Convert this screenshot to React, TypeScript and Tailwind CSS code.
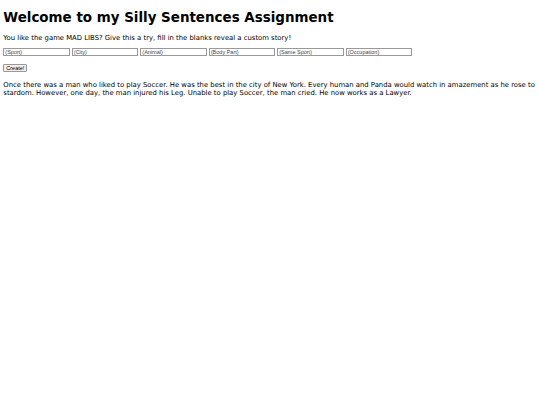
import React, { useState } from "react";

const fields = ["(Sport)", "(City)", "(Animal)", "(Body Part)", "(Same Sport)", "(Occupation)"];

export default function App() {
  const [values, setValues] = useState<string[]>(fields.map(() => ""));

  const story =
    "Once there was a man who liked to play Soccer. He was the best in the city of New York. Every human and Panda would watch in amazement as he rose to stardom. However, one day, the man injured his Leg. Unable to play Soccer, the man cried. He now works as a Lawyer.";

  return (
    <div className="min-h-[405px] bg-white px-[3.33px] pt-[9.5px] font-['DejaVu_Sans',sans-serif] text-black">
      <h1 className="text-[13.45px] font-bold leading-[15.5px]">Welcome to my Silly Sentences Assignment</h1>

      <p className="mt-[9.5px] text-[6.85px] leading-[7.8px]">
        You like the game MAD LIBS? Give this a try, fill in the blanks reveal a custom story!
      </p>

      <div className="mt-[6px] flex gap-[2.1px]">
        {fields.map((f, i) => (
          <input
            key={f}
            value={values[i]}
            placeholder={f}
            onChange={(e) => setValues((prev) => prev.map((v, j) => (j === i ? e.target.value : v)))}
            className="h-[8px] w-[66.4px] border border-[#999] bg-white px-[1px] font-['Liberation_Sans',sans-serif] text-[5.5px] leading-none text-black placeholder:text-[#444]"
          />
        ))}
      </div>

      <button className="mt-[8px] block h-[8px] w-[24px] rounded-[1px] border border-[#999] bg-[#efefef] font-['Liberation_Sans',sans-serif] text-[5.5px] leading-none">
        Create!
      </button>

      <p className="mt-[8.8px] text-[6.85px] leading-[8px]">{story}</p>
    </div>
  );
}
